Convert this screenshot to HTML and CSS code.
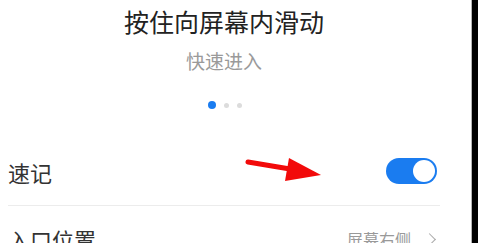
FILE: index.html
```html
<!DOCTYPE html>
<html lang="zh-CN">
<head>
  <meta charset="UTF-8">
  <meta name="viewport" content="width=device-width, initial-scale=1.0">
  <title>速记</title>
  <link rel="stylesheet" href="styles.css">
</head>
<body>
  <div class="phone">
    <div class="content">
      <div class="guide">
        <h1 class="guide-title">按住向屏幕内滑动</h1>
        <p class="guide-sub">快速进入</p>
        <div class="dots">
          <span class="dot active"></span>
          <span class="dot"></span>
          <span class="dot"></span>
        </div>
      </div>

      <div class="setting-row">
        <span class="setting-label">速记</span>
        <span class="switch on"><span class="knob"></span></span>
        <!-- 标注箭头 -->
        <svg class="arrow" width="86" height="30" viewBox="0 0 86 30">
          <line x1="8" y1="8" x2="50" y2="15" stroke="#f20a0a" stroke-width="5" stroke-linecap="round"/>
          <polygon points="49,4 45,27 81,21" fill="#f20a0a"/>
        </svg>
      </div>

      <div class="setting-row">
        <span class="setting-label">入口位置</span>
        <span class="setting-value">屏幕右侧<span class="chevron"></span></span>
      </div>
    </div>
  </div>
</body>
</html>
```

FILE: styles.css
```css
html, body {
  margin: 0;
  height: 243px;
  overflow: hidden;
}

body {
  background: #000;
  font-family: "Noto Sans CJK SC", "Noto Sans", sans-serif;
}

.phone {
  width: 472px;
  height: 243px;
  background: #fff;
  border-right: 1px solid #b4b4b4;
  box-sizing: border-box;
}

.content {
  width: 448px;
  padding: 0 8px;
  box-sizing: border-box;
}

.guide {
  text-align: center;
  padding-top: 6px;
}

.guide-title {
  margin: 0;
  font-size: 25px;
  line-height: 30px;
  font-weight: 400;
  color: #222;
}

.guide-sub {
  margin: 13px 0 0 0;
  font-size: 19px;
  line-height: 24px;
  color: #9a9a9a;
}

.dots {
  display: flex;
  justify-content: center;
  align-items: center;
  gap: 8px;
  height: 10px;
  margin-top: 27px;
  padding-left: 2px;
}

.dot {
  width: 5px;
  height: 5px;
  border-radius: 50%;
  background: #dcdcdc;
}

.dot.active {
  width: 8px;
  height: 8px;
  background: #1a7cf0;
}

.setting-row {
  position: relative;
  display: flex;
  justify-content: space-between;
  align-items: center;
  height: 66px;
  margin-top: 29px;
  border-bottom: 1px solid #ececec;
}

.setting-row + .setting-row {
  margin-top: 0;
  border-bottom: none;
}

.setting-label {
  font-size: 22px;
  color: #333;
}

.switch {
  width: 51px;
  height: 26px;
  border-radius: 13px;
  background: #1a7cf0;
  display: flex;
  align-items: center;
  justify-content: flex-end;
  padding: 0 2px;
  box-sizing: border-box;
  margin-right: 3px;
  margin-top: -2px;
}

.knob {
  width: 22px;
  height: 22px;
  border-radius: 50%;
  background: #fff;
}

.arrow {
  position: absolute;
  left: 232px;
  top: 15px;
}

.setting-value {
  display: flex;
  align-items: center;
  gap: 14px;
  font-size: 16px;
  color: #999;
  margin-right: 4px;
}

.chevron {
  width: 8px;
  height: 8px;
  border-top: 1.5px solid #aaa;
  border-right: 1.5px solid #aaa;
  transform: rotate(45deg);
  margin-right: 2px;
}
```
